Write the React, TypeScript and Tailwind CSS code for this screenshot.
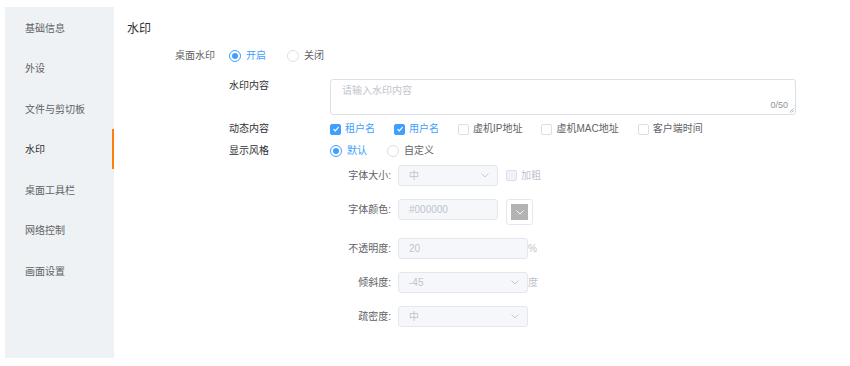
const menu = ["基础信息", "外设", "文件与剪切板", "水印", "桌面工具栏", "网络控制", "画面设置"];

function Radio({ checked, label }: { checked?: boolean; label: string }) {
  return (
    <div className="flex items-center">
      <span
        className={`w-[12px] h-[12px] rounded-full border flex items-center justify-center bg-white ${
          checked ? "border-[#409eff]" : "border-[#dcdfe6]"
        }`}
      >
        {checked && <span className="w-[6px] h-[6px] rounded-full bg-[#409eff]" />}
      </span>
      <span className={`ml-[5px] ${checked ? "text-[#409eff]" : "text-[#606266]"}`}>{label}</span>
    </div>
  );
}

function Checkbox({ checked, label, disabled }: { checked?: boolean; label: string; disabled?: boolean }) {
  return (
    <div className="flex items-center">
      <span
        className={`w-[11px] h-[11px] rounded-[2px] border flex items-center justify-center ${
          checked
            ? "bg-[#409eff] border-[#409eff]"
            : disabled
            ? "bg-[#edf2fc] border-[#dcdfe6]"
            : "bg-white border-[#dcdfe6]"
        }`}
      >
        {checked && (
          <svg width="8" height="8" viewBox="0 0 8 8">
            <path d="M1.5 4.2 L3.3 5.9 L6.6 2.2" fill="none" stroke="white" strokeWidth="1.2" />
          </svg>
        )}
      </span>
      <span
        className={`ml-[4px] ${
          checked ? "text-[#409eff]" : disabled ? "text-[#c0c4cc]" : "text-[#606266]"
        }`}
      >
        {label}
      </span>
    </div>
  );
}

function Chevron({ color = "#c0c4cc" }: { color?: string }) {
  return (
    <svg width="8" height="5" viewBox="0 0 8 5">
      <path d="M0.5 0.5 L4 4 L7.5 0.5" fill="none" stroke={color} strokeWidth="0.9" />
    </svg>
  );
}

function Field({ value, width, select }: { value: string; width: string; select?: boolean }) {
  return (
    <div
      className={`${width} h-[21px] rounded-[3px] border border-[#e4e7ed] bg-[#f5f7fa] flex items-center justify-between pl-[10px] pr-[8px] text-[#c0c4cc]`}
    >
      <span>{value}</span>
      {select && <Chevron />}
    </div>
  );
}

function SubRow({ label, children }: { label: string; children: React.ReactNode }) {
  return (
    <div className="flex items-start">
      <div className="w-[61px] h-[21px] flex items-center justify-end text-[#606266] mr-[7px]">{label}</div>
      <div className="flex items-start">{children}</div>
    </div>
  );
}

export default function App() {
  return (
    <div
      className="w-[850px] h-[366px] bg-white flex pt-[7px] pl-[5px] text-[10px] leading-[14px]"
      style={{ fontFamily: '"Liberation Sans", "Noto Sans CJK SC", sans-serif' }}
    >
      <div className="w-[109px] h-[351px] bg-[#eef2f5] flex flex-col">
        {menu.map((m, i) => (
          <div
            key={m}
            className={`h-[40.5px] flex items-center pl-[20px] pt-[3px] relative ${
              i === 3 ? "text-[#303133]" : "text-[#606266]"
            }`}
          >
            {m}
            {i === 3 && <span className="absolute right-0 top-0 w-[2px] h-full bg-[#ff7d0a]" />}
          </div>
        ))}
      </div>

      <div className="pl-[13px] pt-[14px] flex flex-col">
        <div className="h-[16px] text-[12px] leading-[16px] text-[#303133]">水印</div>

        <div className="mt-[11px] h-[16px] flex items-center">
          <div className="w-[88px] text-right text-[#606266]">桌面水印</div>
          <div className="ml-[14px] flex items-center gap-[21px]">
            <Radio checked label="开启" />
            <Radio label="关闭" />
          </div>
        </div>

        <div className="ml-[102px] mt-[15px] flex flex-col">
          <div className="flex items-start">
            <div className="w-[101px] text-[#303133]">水印内容</div>
            <div className="w-[466px] h-[36px] rounded-[3px] border border-[#dcdfe6] bg-white relative">
              <span className="absolute left-[11px] top-[4px] text-[#c0c4cc]">请输入水印内容</span>
              <span className="absolute right-[7px] bottom-[2px] text-[9px] text-[#909399]">0/50</span>
              <svg className="absolute right-[1px] bottom-[1px]" width="5" height="5" viewBox="0 0 5 5">
                <path d="M0.5 4.5 L4.5 0.5 M2.5 4.5 L4.5 2.5" stroke="#909399" strokeWidth="0.7" />
              </svg>
            </div>
          </div>

          <div className="mt-[7px] flex items-center">
            <div className="w-[101px] text-[#303133]">动态内容</div>
            <div className="flex items-center gap-[19px]">
              <Checkbox checked label="租户名" />
              <Checkbox checked label="用户名" />
              <Checkbox label="虚机IP地址" />
              <Checkbox label="虚机MAC地址" />
              <Checkbox label="客户端时间" />
            </div>
          </div>

          <div className="mt-[8px] flex items-center">
            <div className="w-[101px] text-[#303133]">显示风格</div>
            <div className="flex items-center gap-[20px]">
              <Radio checked label="默认" />
              <Radio label="自定义" />
            </div>
          </div>

          <div className="ml-[101px] mt-[7px] flex flex-col gap-[13px]">
            <SubRow label="字体大小:">
              <Field value="中" width="w-[100px]" select />
              <div className="ml-[8px] h-[21px] flex items-center">
                <Checkbox disabled label="加粗" />
              </div>
            </SubRow>
            <SubRow label="字体颜色:">
              <Field value="#000000" width="w-[100px]" />
              <div className="ml-[8px] w-[27px] h-[26px] rounded-[3px] border border-[#e4e7ed] bg-white flex items-center justify-center">
                <div className="w-[17px] h-[16px] bg-[#b3b3b3] flex items-center justify-center">
                  <Chevron color="#ffffff" />
                </div>
              </div>
            </SubRow>
            <SubRow label="不透明度:">
              <Field value="20" width="w-[130px]" />
              <span className="h-[21px] flex items-center text-[#c0c4cc]">%</span>
            </SubRow>
            <SubRow label="倾斜度:">
              <Field value="-45" width="w-[130px]" select />
              <span className="h-[21px] flex items-center text-[#c0c4cc]">度</span>
            </SubRow>
            <SubRow label="疏密度:">
              <Field value="中" width="w-[130px]" select />
            </SubRow>
          </div>
        </div>
      </div>
    </div>
  );
}
